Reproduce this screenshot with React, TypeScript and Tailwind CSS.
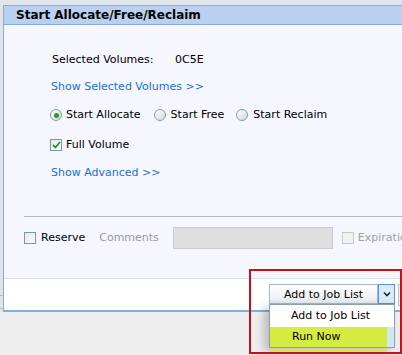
import React from "react";

const Radio = ({ checked }: { checked?: boolean }) => (
  <span className="flex h-[12px] w-[12px] shrink-0 items-center justify-center rounded-full border border-[#7f9db9] bg-gradient-to-br from-white to-[#d6d6d6]">
    {checked && <span className="h-[5px] w-[5px] rounded-full bg-[#21a121]" />}
  </span>
);

const Check = ({ checked, disabled }: { checked?: boolean; disabled?: boolean }) => (
  <span
    className={`flex h-[12px] w-[12px] shrink-0 items-center justify-center border ${
      disabled
        ? "border-[#cacaca] bg-[#f1f1f1]"
        : "border-[#7496bd] bg-gradient-to-br from-[#e6e6e6] to-white"
    }`}
  >
    {checked && (
      <svg width="9" height="8" viewBox="0 0 9 8">
        <path d="M1 4 L3.5 6.5 L8 1" fill="none" stroke="#1f9a1f" strokeWidth="1.8" />
      </svg>
    )}
  </span>
);

export default function App() {
  return (
    <div className="relative flex h-[355px] w-[402px] flex-col overflow-hidden bg-[#eeeeee] font-['DejaVu_Sans',Verdana,sans-serif] text-[11px] text-black">
      <div className="h-[5px] shrink-0 bg-[#dde5eb]" />
      <div className="flex shrink-0">
        <div className="flex w-[3px] shrink-0 flex-col bg-[#e3e3e3]">
          <div className="h-[290px]" />
          <div className="h-px bg-[#b9b9b9]" />
          <div className="h-[12px]" />
          <div className="h-px bg-[#b9b9b9]" />
        </div>
        <div className="min-w-0 flex-1 overflow-hidden border-b-2 border-l border-[#86aedd]">
          {/* header */}
          <div className="flex h-[20px] items-center border-y border-[#85acdf] bg-[#b9d0ef] pl-[12px] text-[12px] font-bold leading-none">
            Start Allocate/Free/Reclaim
          </div>

          {/* body */}
          <div className="h-[253px] bg-[#f5f6fe]">
            <div className="flex flex-col pl-[46px] pt-[28px] leading-[14px]">
              <div className="flex h-[14px] items-center pl-[2px]">
                <span className="w-[123px]">Selected Volumes:</span>
                <span>0C5E</span>
              </div>
              <div className="mt-[13px] h-[14px] pl-[1px] text-[#1d6fd0]">Show Selected Volumes &gt;&gt;</div>
              <div className="mt-[14px] flex h-[14px] items-center">
                <Radio checked />
                <span className="ml-[4px]">Start Allocate</span>
                <span className="ml-[13px]">
                  <Radio />
                </span>
                <span className="ml-[5px]">Start Free</span>
                <span className="ml-[12px]">
                  <Radio />
                </span>
                <span className="ml-[5px]">Start Reclaim</span>
              </div>
              <div className="mt-[16px] flex h-[14px] items-center">
                <Check checked />
                <span className="ml-[4px]">Full Volume</span>
              </div>
              <div className="mt-[14px] h-[14px] pl-[1px] text-[#1d6fd0]">Show Advanced &gt;&gt;</div>
            </div>

            <div className="ml-[20px] mt-[36px] h-px bg-[#b4b7bf]" />

            <div className="mt-[10px] flex h-[22px] items-center pl-[20px]">
              <Check />
              <span className="ml-[5px]">Reserve</span>
              <span className="ml-[14px] text-[#9a9a9a]">Comments</span>
              <div className="ml-[14px] h-[22px] w-[160px] shrink-0 border border-[#cbcbcb] bg-[#dedfde]" />
              <span className="ml-[9px]">
                <Check disabled />
              </span>
              <span className="ml-[4px] whitespace-nowrap text-[#a3a3a3]">Expiration</span>
            </div>
          </div>

          {/* footer */}
          <div className="flex h-[32px] items-start border-t border-[#d5e2f4] bg-white pl-[265px] pt-[5px]">
            <div className="flex h-[20px] w-[109px] shrink-0 items-center justify-center whitespace-nowrap border border-[#a7b8cc] bg-gradient-to-b from-white to-[#e9ecef] leading-none">
              Add to Job List
            </div>
            <div className="flex h-[20px] w-[17px] shrink-0 items-center justify-center border border-[#5a95d8] bg-[#dcebfb]">
              <svg width="8" height="6" viewBox="0 0 8 6">
                <path d="M1 1.5 L4 4.5 L7 1.5" fill="none" stroke="#1b2a3a" strokeWidth="1.6" />
              </svg>
            </div>
            <div className="ml-[3px] h-[22px] w-[6px] shrink-0 border border-[#b4c3d3] bg-[#f3f5f8]" />
          </div>
        </div>
      </div>

      {/* dropdown menu */}
      <div className="absolute left-[269px] top-[304px] flex h-[44px] w-[126px] flex-col border border-[#8c9db1] bg-white shadow-[-5px_3px_9px_rgba(0,0,0,0.22)]">
        <div className="flex h-[22px] items-center pl-[21px]">Add to Job List</div>
        <div className="flex h-[20px]">
          <div className="flex flex-1 items-center bg-[#d4eb3f] pl-[22px]">Run Now</div>
          <div className="w-[7px] bg-[#d3e6f8]" />
        </div>
      </div>
      <div className="absolute left-[270px] top-[349px] h-[4px] w-[117px] bg-[#d4eb3f]" />

      {/* annotation box */}
      <div className="absolute left-[249px] top-[269px] h-[85px] w-[153px] border-2 border-[#c4121b]" />
    </div>
  );
}
